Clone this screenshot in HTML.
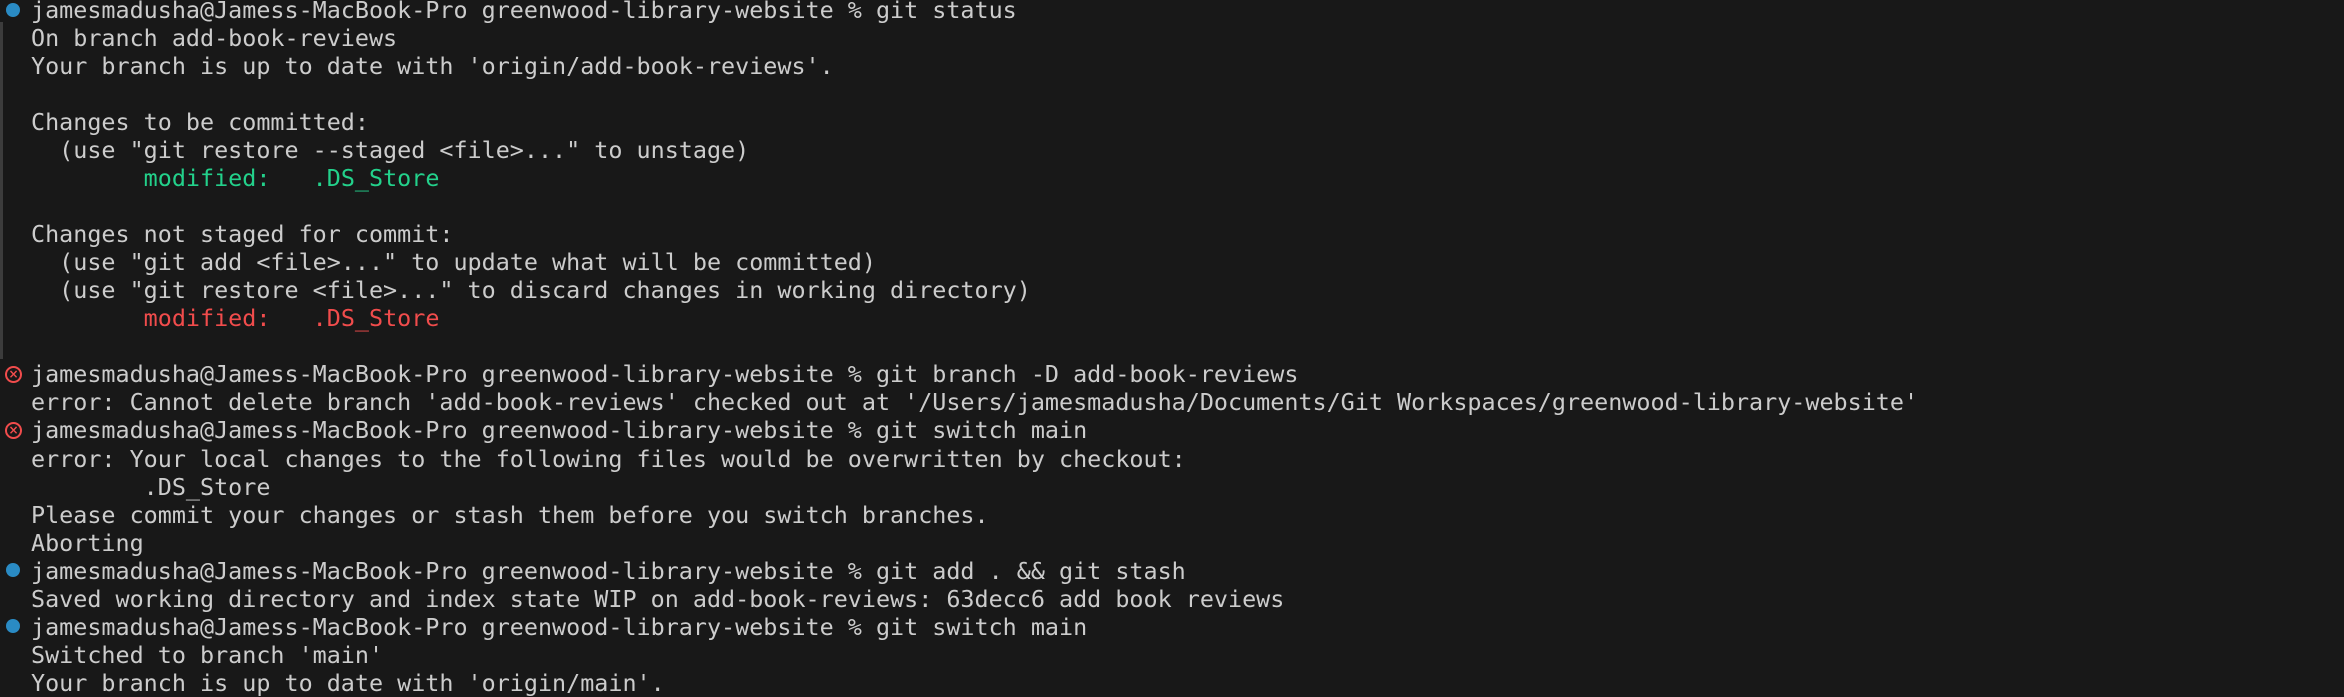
<!DOCTYPE html>
<html><head><meta charset="utf-8"><style>
html,body{margin:0;padding:0;background:#181818;width:2344px;height:692px;overflow:hidden}
.t{position:absolute;left:31px;top:-4px;font-family:"DejaVu Sans Mono","Liberation Mono",monospace;font-size:23.4px;line-height:28.03px;color:#cccccc;white-space:pre}
.g{color:#23d18b}.r{color:#f14c4c}
.bar{position:absolute;left:0;top:22px;width:3px;height:337px;background:#3c3c3c}
.dot{position:absolute;left:6px;width:14px;height:14px;border-radius:50%;background:#2a8bc4}
.x{position:absolute;left:5px;width:13px;height:13px;border:2.5px solid #f14c4c;border-radius:50%;color:#f14c4c;font:bold 12px "DejaVu Sans",sans-serif;text-align:center;line-height:13px}
</style></head><body>
<div class="bar"></div>
<div class="dot" style="top:3px"></div>
<div class="x" style="top:366px">×</div>
<div class="x" style="top:422px">×</div>
<div class="dot" style="top:563px"></div>
<div class="dot" style="top:619px"></div>
<div class="t">jamesmadusha@Jamess-MacBook-Pro greenwood-library-website % git status
On branch add-book-reviews
Your branch is up to date with 'origin/add-book-reviews'.

Changes to be committed:
  (use "git restore --staged &lt;file&gt;..." to unstage)
        <span class="g">modified:   .DS_Store</span>

Changes not staged for commit:
  (use "git add &lt;file&gt;..." to update what will be committed)
  (use "git restore &lt;file&gt;..." to discard changes in working directory)
        <span class="r">modified:   .DS_Store</span>

jamesmadusha@Jamess-MacBook-Pro greenwood-library-website % git branch -D add-book-reviews
error: Cannot delete branch 'add-book-reviews' checked out at '/Users/jamesmadusha/Documents/Git Workspaces/greenwood-library-website'
jamesmadusha@Jamess-MacBook-Pro greenwood-library-website % git switch main
error: Your local changes to the following files would be overwritten by checkout:
        .DS_Store
Please commit your changes or stash them before you switch branches.
Aborting
jamesmadusha@Jamess-MacBook-Pro greenwood-library-website % git add . &amp;&amp; git stash
Saved working directory and index state WIP on add-book-reviews: 63decc6 add book reviews
jamesmadusha@Jamess-MacBook-Pro greenwood-library-website % git switch main
Switched to branch 'main'
Your branch is up to date with 'origin/main'.</div>
</body></html>
